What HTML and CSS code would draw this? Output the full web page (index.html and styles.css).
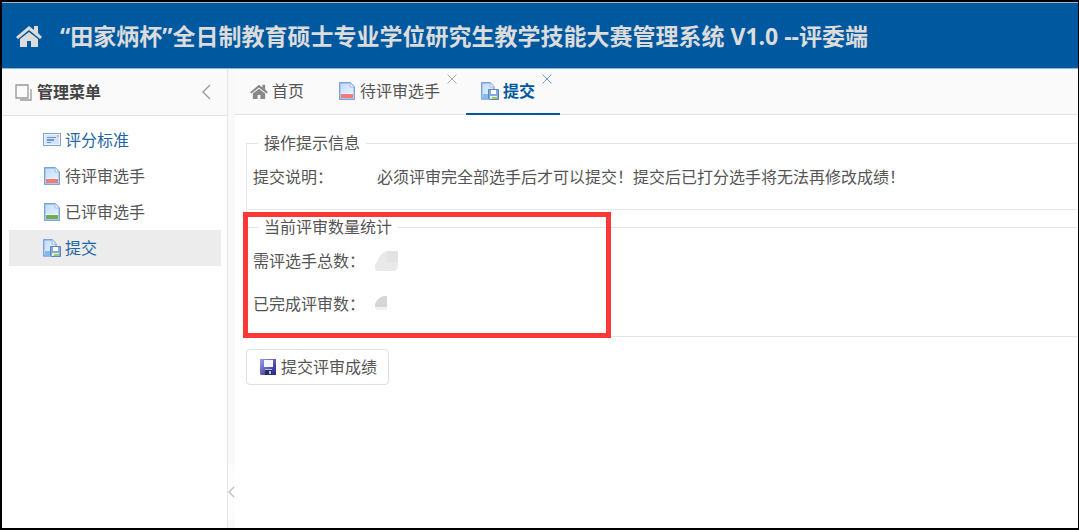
FILE: index.html
```html
<!DOCTYPE html>
<html lang="zh-CN">
<head>
  <meta charset="UTF-8">
  <meta name="viewport" content="width=device-width, initial-scale=1.0">
  <title>教学技能大赛管理系统</title>
  <link rel="stylesheet" href="styles.css">
</head>
<body>

  <!-- shared icons -->
  <svg class="sprite" width="0" height="0" aria-hidden="true">
    <defs>
      <linearGradient id="paper" x1="0" y1="0" x2="1" y2="1">
        <stop offset="0" stop-color="#c3dcf8"/>
        <stop offset="1" stop-color="#eaf4ff"/>
      </linearGradient>
      <linearGradient id="disk" x1="0" y1="0" x2="1" y2="1">
        <stop offset="0" stop-color="#9a9af0"/>
        <stop offset="1" stop-color="#23237f"/>
      </linearGradient>
    </defs>
    <symbol id="home" viewBox="0 0 26 22">
      <path d="M13 1 L0 12 L2 14 L13 5 L24 14 L26 12 L22 8 V1 H18 V5 Z"/>
      <path d="M13 7 L4 14 V22 H11 V16 H15 V22 H22 V14 Z"/>
    </symbol>
    <symbol id="page" viewBox="0 0 18 20">
      <path d="M1.7 1.7 H12 L16.3 6 V18.3 H1.7 Z" fill="url(#paper)" stroke="#7ba3d9" stroke-width="1.4" stroke-linejoin="round"/>
      <path d="M12 2 V6 H16" fill="#f4f9ff" stroke="#9cbce6"/>
      <path d="M3 12 H15 V17 H3 Z" fill="#eef6ff"/>
      <path d="M3 13 H15 V17 H3 Z" fill="currentColor"/>
    </symbol>
    <symbol id="pagesave" viewBox="0 0 18 20">
      <path d="M0.7 1.7 H9 L13 6 V18 H0.7 Z" fill="url(#paper)" stroke="#7ba3d9" stroke-width="1.4" stroke-linejoin="round"/>
      <path d="M9 2 V6 H13" fill="#f4f9ff" stroke="#9cbce6"/>
      <path d="M2 13 H7 V17 H2 Z" fill="#79bdf2"/>
      <path d="M7.5 8.5 H17.5 V18.5 H8.5 L7.5 17.5 Z" fill="#86a9de" stroke="#5c83c0"/>
      <path d="M10 9 H15 V13 H10 Z" fill="#fff"/>
      <path d="M9 15 H16 V18 H9 Z" fill="#e4f0d8"/>
      <path d="M11 16 H16 V18 H11 Z" fill="#9ccb62"/>
    </symbol>
  </svg>

  <header class="header">
    <svg class="header-icon"><use href="#home"/></svg>
    <h1>“田家炳杯”全日制教育硕士专业学位研究生教学技能大赛管理系统 V1.0 --评委端</h1>
  </header>

  <div class="container">
    <aside class="sidebar">
      <div class="sidebar-title">
        <svg class="icon-windows" viewBox="0 0 17 17" fill="none" stroke="#999" stroke-width="1.3">
          <path d="M1 1 H13 V14 H1 Z"/>
          <path d="M16 5 V16 H5"/>
        </svg>
        <h2>管理菜单</h2>
        <button class="collapse" type="button" aria-label="收起菜单">
          <svg viewBox="0 0 9 16" width="9" height="16" fill="none" stroke="#999" stroke-width="1.3"><path d="M8 1 L1 8 L8 15"/></svg>
        </button>
      </div>
      <nav class="menu">
        <a href="#" class="link">
          <svg class="icon" viewBox="0 0 18 20">
            <path d="M0 3 H18 V16 H0 Z" fill="#7ba3d9"/>
            <path d="M1 4 H17 V15 H1 Z" fill="#eef5fd"/>
            <path d="M2 5 H16 V14 H2 Z" fill="#d3e4f8"/>
            <path d="M14 5 H16 V7 H14 Z" fill="#f4a59a"/>
            <path d="M4 7 H13 V8 H4 Z M4 9 H11 V11 H4 Z M4 12 H8 V13 H4 Z" fill="#6c97d0"/>
          </svg>
          <span>评分标准</span>
        </a>
        <a href="#"><svg class="icon red"><use href="#page"/></svg><span>待评审选手</span></a>
        <a href="#"><svg class="icon green"><use href="#page"/></svg><span>已评审选手</span></a>
        <a href="#" class="link selected"><svg class="icon"><use href="#pagesave"/></svg><span>提交</span></a>
      </nav>
    </aside>

    <div class="splitter">
      <button class="splitter-btn" type="button" aria-label="收起">
        <svg viewBox="0 0 7 12" width="7" height="12" fill="none" stroke="#bbb" stroke-width="1.2"><path d="M6 1 L1 6 L6 11"/></svg>
      </button>
    </div>

    <main class="main">
      <nav class="tabs">
        <a href="#" class="tab home"><svg class="icon"><use href="#home"/></svg><span>首页</span></a>
        <div class="tab">
          <a href="#"><svg class="icon red"><use href="#page"/></svg><span>待评审选手</span></a>
          <button class="close" type="button" aria-label="关闭"><svg viewBox="0 0 10 10" width="10" height="10"><path d="M0.5 0.5 L9.5 9.5 M9.5 0.5 L0.5 9.5"/></svg></button>
        </div>
        <div class="tab active">
          <a href="#"><svg class="icon"><use href="#pagesave"/></svg><span>提交</span></a>
          <button class="close" type="button" aria-label="关闭"><svg viewBox="0 0 10 10" width="10" height="10"><path d="M0.5 0.5 L9.5 9.5 M9.5 0.5 L0.5 9.5"/></svg></button>
        </div>
      </nav>

      <div class="content">
        <fieldset>
          <legend>操作提示信息</legend>
          <dl class="row">
            <dt>提交说明：</dt>
            <dd>必须评审完全部选手后才可以提交！提交后已打分选手将无法再修改成绩！</dd>
          </dl>
        </fieldset>

        <div class="count">
          <fieldset>
            <legend>当前评审数量统计</legend>
            <dl class="row">
              <dt>需评选手总数：</dt>
              <dd><svg class="mask" viewBox="0 0 24 20" width="24" height="20"><path d="M2 11 Q5 1 13 0 H23 V15 Q22 20 18 20 H2 Q0 20 0 17 V13 Z" fill="#e9e9e9"/><path d="M12 0 H23 V11 H12 Z" fill="#e3e3e3"/></svg></dd>
            </dl>
            <dl class="row">
              <dt>已完成评审数：</dt>
              <dd><svg class="mask" viewBox="0 0 24 20" width="24" height="20"><path d="M0 10 Q3 3 9 2 H12 V13 H0 Z" fill="#d6d6d6"/><path d="M0 13 H12 V16 H2 Q0 15 0 13 Z" fill="#f1f1f1"/></svg></dd>
            </dl>
          </fieldset>
          <div class="highlight"></div>
        </div>

        <button class="submit" type="button">
          <svg viewBox="0 0 16 16" width="16" height="16">
            <path d="M0 0 H16 V16 H1 L0 15 Z" fill="url(#disk)"/>
            <path d="M4 1 H13 V8 H4 Z" fill="#f3f5ff"/>
            <path d="M5 10 H12 V16 H5 Z" fill="#2a2a66"/>
            <path d="M5 10 H12 V11 H5 Z M9 12 H11 V15 H9 Z" fill="#b9bde8"/>
          </svg>
          <span>提交评审成绩</span>
        </button>
      </div>
    </main>
  </div>

</body>
</html>
```
FILE: styles.css
```css
* {
  box-sizing: border-box;
}

body {
  display: flex;
  flex-direction: column;
  min-height: 100vh;
  margin: 0;
  border: 2px solid #000;
  border-right-width: 1px;
  font-family: "Open Sans", "Noto Sans CJK SC", sans-serif;
  font-size: 16px;
  line-height: 24px;
  color: #555;
  background: #fff;
}

a {
  color: inherit;
  text-decoration: none;
}

button {
  padding: 0;
  border: none;
  background: none;
  font: inherit;
  color: inherit;
  cursor: pointer;
}

svg {
  display: block;
  flex: none;
}

.sprite {
  position: absolute;
}

.icon {
  width: 18px;
  height: 20px;
}

.red {
  color: #f47a7a;
}

.green {
  color: #6fae4e;
}

/* header */
.header {
  display: flex;
  align-items: center;
  gap: 18px;
  height: 67px;
  padding: 0 14px;
  border-top: 1px solid #9fb6cf;
  border-bottom: 1px solid #8fb4d6;
  background: #00589f;
  color: #dcdcdc;
}

.header h1 {
  margin: 0;
  font-size: 23px;
  line-height: 32px;
  white-space: nowrap;
}

.header-icon {
  width: 26px;
  height: 22px;
  fill: currentColor;
}

.container {
  display: flex;
  flex: 1;
}

/* left menu */
.sidebar {
  width: 226px;
  border-right: 1px solid #e5e5e5;
}

.sidebar-title {
  display: flex;
  align-items: center;
  gap: 5px;
  height: 47px;
  padding: 0 16px 0 13px;
  border-bottom: 1px solid #e2e2e2;
  background: #fafafa;
}

.sidebar-title h2 {
  flex: 1;
  margin: 0;
  font-size: 16px;
  color: #444;
}

.icon-windows {
  width: 17px;
  height: 17px;
}

.menu {
  padding: 6px 6px 6px 7px;
}

.menu a {
  display: flex;
  align-items: center;
  gap: 4px;
  height: 36px;
  padding-left: 34px;
}

.menu .link {
  color: #1f66a5;
}

.menu .selected {
  background: #ececec;
}

.splitter {
  display: flex;
  flex-direction: column;
  justify-content: flex-end;
  width: 7px;
  padding-bottom: 9px;
  background: #f9f9f9;
}

.splitter-btn {
  height: 54px;
  background: #fdfdfd;
}

/* tabs */
.main {
  flex: 1;
  min-width: 0;
}

.tabs {
  display: flex;
  gap: 1px;
  height: 46px;
  border-bottom: 1px solid #e2e2e2;
  background: #fafafa;
}

.tab {
  position: relative;
  display: flex;
  height: 46px;
  padding: 0 25px 0 15px;
  border-bottom: 2px solid transparent;
}

.tab.home {
  padding-right: 18px;
}

.tab.home,
.tab a {
  display: flex;
  align-items: center;
  gap: 4px;
}

.tab.home .icon {
  height: 15px;
  fill: #888;
}

.tab.active {
  border-bottom-color: #00589f;
  font-weight: bold;
  color: #00589f;
}

.close {
  position: absolute;
  top: 5px;
  right: 8px;
}

.close svg {
  fill: none;
  stroke: #aaa;
}

.active .close svg {
  stroke: #6c9dc8;
}

/* content */
.content {
  padding: 16px 0 0 11px;
}

fieldset {
  min-width: 0;
  margin: 0;
  padding: 10px 6px 20px;
  border: 1px solid #e5e5e5;
  border-right: none;
}

legend {
  margin-left: 5px;
  padding: 0 6px;
}

.row {
  display: grid;
  grid-template-columns: 124px 1fr;
  align-items: center;
  margin: 0;
}

.row dd {
  margin: 0;
}

/* review numbers, marked with a red frame */
.count {
  position: relative;
  margin: 5px 0 12px;
}

.count .row {
  grid-template-columns: 122px 1fr;
}

.count .row + .row {
  margin-top: 19px;
}

.highlight {
  position: absolute;
  top: -3px;
  left: -3px;
  width: 368px;
  height: 126px;
  border: 5px solid #fb3838;
}

.submit {
  display: flex;
  align-items: center;
  gap: 5px;
  height: 36px;
  padding: 0 11px 0 13px;
  border: 1px solid #e0e0e0;
  border-radius: 4px;
  background: #fff;
}
```
